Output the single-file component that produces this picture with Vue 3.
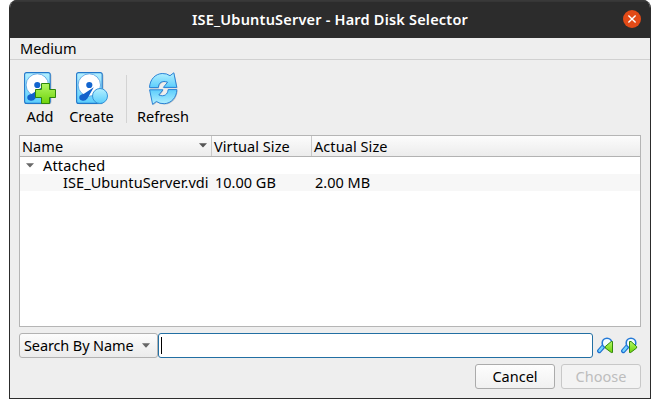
<script setup>
import { ref } from 'vue'

const columns = [
  { label: 'Name', cls: 'c-name', sorted: true },
  { label: 'Virtual Size', cls: 'c-virtual' },
  { label: 'Actual Size', cls: 'c-actual' },
]
const group = 'Attached'
const disks = [{ name: 'ISE_UbuntuServer.vdi', virtual: '10.00 GB', actual: '2.00 MB' }]
const query = ref('')
</script>

<template>
  <div class="window">
    <header class="titlebar">
      <span class="title">ISE_UbuntuServer - Hard Disk Selector</span>
      <button class="close" aria-label="Close">
        <svg width="18" height="18" viewBox="0 0 18 18"><path d="M5.4 5.4l7.2 7.2M12.6 5.4l-7.2 7.2" stroke="#fff" stroke-width="1.4" /></svg>
      </button>
    </header>
    <nav class="menubar"><span class="t-medium">Medium</span></nav>

    <svg class="defs" width="0" height="0">
      <defs>
        <linearGradient id="aqua" x1="0" y1="0" x2="0" y2="1"><stop offset="0" stop-color="#b4f0ff" /><stop offset="1" stop-color="#5bcdfc" /></linearGradient>
        <linearGradient id="lime" x1="0" y1="0" x2="0" y2="1"><stop offset="0" stop-color="#b2f764" /><stop offset="1" stop-color="#6fd30b" /></linearGradient>
        <path id="arrow-half" d="M2.5 15.6C2.8 7.6 8.2 1.8 15.2 1.5q4.5-.2 7.8 2.2L26.8 .8l3 14.6H16.4l4.2-5.2C15.2 8 11.6 10.8 11.3 15.6z" />
        <g id="disk">
          <rect x="1.5" y="1.3" width="26" height="31" rx="2.2" fill="#a9b0b5" opacity=".65" />
          <rect x=".6" y=".6" width="25.6" height="30.8" rx="2" fill="url(#aqua)" stroke="#2277ca" stroke-width="1.1" />
          <circle cx="13.3" cy="13" r="11.2" fill="#fff" stroke="#4b9be0" stroke-width=".8" />
          <circle cx="13.3" cy="13" r="3.1" fill="#1265cf" />
          <path d="M17.8 15.2L11.4 26.6q-2.4 3-5.6 1.9-3.2-1-2.4-4 .6-2 4.2-2.5z" fill="#1261cb" />
        </g>
      </defs>
    </svg>

    <div class="toolbar">
      <button class="tool add">
        <svg width="34" height="34" viewBox="0 0 34 34">
          <use href="#disk" />
          <path d="M17.5 11.5h8v6h6v8h-6v6h-8v-6h-6v-8h6z" fill="url(#lime)" stroke="#2f850b" stroke-width="1" />
        </svg>
        <span class="t-add">Add</span>
      </button>
      <button class="tool create">
        <svg width="34" height="34" viewBox="0 0 34 34">
          <use href="#disk" />
          <circle cx="24" cy="24" r="7.5" fill="url(#aqua)" stroke="#3794d8" stroke-width="1" />
        </svg>
        <span class="t-create">Create</span>
      </button>
      <i class="divider"></i>
      <button class="tool refresh">
        <svg width="34" height="34" viewBox="0 0 34 34" stroke-linejoin="round">
          <g transform="translate(.7 .8)" fill="#9ca5aa" opacity=".6">
            <use href="#arrow-half" />
            <use href="#arrow-half" transform="rotate(180 16.2 16.6)" />
          </g>
          <g fill="url(#aqua)" stroke="#2b82d5" stroke-width="1">
            <use href="#arrow-half" />
            <use href="#arrow-half" transform="rotate(180 16.2 16.6)" />
          </g>
        </svg>
        <span class="t-refresh">Refresh</span>
      </button>
    </div>

    <section class="tree">
      <div class="head">
        <div v-for="c in columns" :key="c.label" class="cell" :class="c.cls">
          <span>{{ c.label }}</span>
          <svg v-if="c.sorted" class="sort" width="8" height="5" viewBox="0 0 8 5"><path d="M0 .3h8L4.3 4.2h-.6z" fill="#555" /></svg>
        </div>
      </div>
      <div class="row group">
        <svg width="8" height="5" viewBox="0 0 8 5"><path d="M0 .3h8L4.3 4.2h-.6z" fill="#686868" /></svg>
        <span>{{ group }}</span>
      </div>
      <div v-for="d in disks" :key="d.name" class="row item">
        <div class="i-name"><span>{{ d.name }}</span></div>
        <div class="i-virtual"><span>{{ d.virtual }}</span></div>
        <div class="i-actual"><span>{{ d.actual }}</span></div>
      </div>
    </section>

    <div class="search">
      <button class="combo">
        <span>Search By Name</span>
        <svg width="8" height="5" viewBox="0 0 8 5"><path d="M0 .3h8L4.3 4.4h-.6z" fill="#666" /></svg>
      </button>
      <div class="field"><i class="caret"></i><span>{{ query }}</span></div>
      <svg class="find" width="17" height="17" viewBox="0 0 17 17">
        <path d="M6.5 9.2L2.3 14" stroke="#1c6ed0" stroke-width="4.4" stroke-linecap="round" />
        <path d="M6.3 9.3L2.5 13.8" stroke="#73d5ff" stroke-width="2.4" stroke-linecap="round" />
        <circle cx="10" cy="6" r="4.8" fill="#f4fdff" stroke="#2479d7" stroke-width="1.6" />
        <path d="M15.5 4.5v11h-1.2L8.3 11V9.5l6-5z" fill="url(#lime)" stroke="#32890c" />
      </svg>
      <svg class="find" width="17" height="17" viewBox="0 0 17 17">
        <path d="M6.5 9.2L2.3 14" stroke="#1c6ed0" stroke-width="4.4" stroke-linecap="round" />
        <path d="M6.3 9.3L2.5 13.8" stroke="#73d5ff" stroke-width="2.4" stroke-linecap="round" />
        <circle cx="10" cy="6" r="4.8" fill="#f4fdff" stroke="#2479d7" stroke-width="1.6" />
        <path d="M8.5 4.5v11h1.2l5.9-4.5V9.5l-5.5-5z" fill="url(#lime)" stroke="#32890c" />
      </svg>
    </div>

    <footer class="actions">
      <button class="btn"><span class="t-cancel">Cancel</span></button>
      <button class="btn" disabled><span class="t-choose">Choose</span></button>
    </footer>
  </div>
</template>

<style>
body { background: #fff; }
</style>

<style scoped>
* { box-sizing: border-box; }
.window {
  width: 642px; height: 399px; margin-left: 9px;
  display: flex; flex-direction: column;
  background: #eee; border: 1px solid #2c2c2c; border-top: 0;
  border-radius: 8px 8px 0 0; overflow: hidden;
  font: 14.5px/17px "Noto Sans", "Open Sans", sans-serif; color: #000;
}
button { font: inherit; color: inherit; border: 0; padding: 0; background: none; }
span { white-space: nowrap; }
svg { flex: none; display: block; }
.defs { position: absolute; }
.titlebar {
  flex: none; height: 38px; margin: 0 -1px; position: relative;
  display: flex; align-items: center; justify-content: center;
  background: #2c2c2c; border-top: 1px solid #393939; box-shadow: inset 0 1px #363636;
  color: #fff; font-size: 14.5px; font-weight: 600; letter-spacing: .2px;
}
.close { position: absolute; right: 10px; top: 9px; width: 18px; height: 18px; border-radius: 50%; background: #e24a17; }
.menubar { flex: none; height: 22px; padding: 2px 10px 0; border-bottom: 1px solid #d0d0d0; }
.toolbar { flex: none; height: 75px; padding: 12px 0 0 10px; display: flex; }
.tool { height: 54px; display: flex; flex-direction: column; align-items: center; }
.tool span { margin-top: 2px; }
.tool.add { width: 40px; }
.tool.add svg { margin-left: 1px; }
.tool.create { width: 63px; }
.tool.create svg { margin-left: 2px; }
.divider { width: 1px; height: 48px; margin: 3px 5px 0 3px; background: #d3d3d3; }
.tool.refresh { width: 62px; }
.tool.refresh svg { margin-left: 2px; }
.tree { flex: none; width: 622px; height: 192px; margin-left: 9px; background: #fff; border: 1px solid #b5b5b5; }
.head { height: 21px; display: flex; background: linear-gradient(#fcfcfc, #ececec); border-bottom: 1px solid #b2b2b2; letter-spacing: .07px; }
.cell { display: flex; padding: 2px 2px 0; border-right: 1px solid #c9c9c9; }
.c-name { width: 192px; justify-content: space-between; padding-right: 4px; }
.sort { margin-top: 5px; }
.c-virtual { width: 100px; }
.c-actual { flex: 1; border: 0; }
.row { height: 17px; display: flex; }
.group { padding-left: 6px; gap: 9px; letter-spacing: .18px; }
.group svg { margin-top: 6px; }
.item { background: #f7f7f7; }
.i-name { width: 195px; padding-left: 43px; letter-spacing: .07px; }
.i-virtual { width: 100px; }
.search { flex: none; height: 25px; margin: 6px 0 0 9px; display: flex; }
.combo {
  width: 139px; padding: 0 7px 0 4px; display: flex; align-items: center; justify-content: space-between;
  background: linear-gradient(#fcfcfc, #ebebeb); border: 1px solid #b2b2b2; border-radius: 3px;
  letter-spacing: -.12px;
}
.field { width: 435px; padding: 3px 2px; display: flex; background: #fff; border: 1px solid #226fa3; border-radius: 3px; }
.caret { width: 1px; height: 17px; background: #000; }
.find { margin: 4px 0 0 4px; }
.find + .find { margin-left: 7px; }
.actions { display: flex; justify-content: flex-end; gap: 6px; padding: 6px 9px 0 0; }
.btn { width: 80px; height: 25px; background: linear-gradient(#fdfdfd, #f1f1f1); border: 1px solid #ababab; border-radius: 3px; }
.btn:disabled { background: #f3f3f3; border-color: #c8c8c8; color: #bdbdbd; }
</style>
